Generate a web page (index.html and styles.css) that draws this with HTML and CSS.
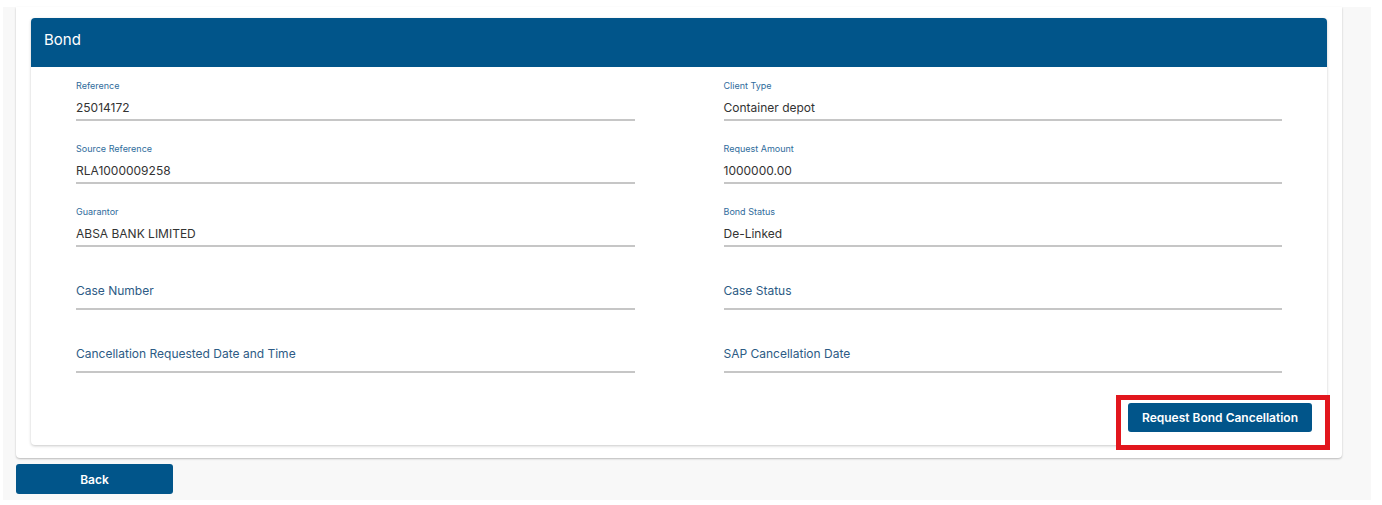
FILE: index.html
```html
<!DOCTYPE html>
<html lang="en">
<head>
    <meta charset="UTF-8">
    <meta name="viewport" content="width=device-width, initial-scale=1.0">
    <title>Bond</title>
    <link rel="stylesheet" href="styles.css">
</head>
<body>
    <div class="page">
        <div class="outer-card">
            <div class="bond-card">
                <div class="bond-header">Bond</div>

                <div class="field-grid">
                    <div class="field">
                        <div class="field-label">Reference</div>
                        <div class="field-value">25014172</div>
                    </div>
                    <div class="field">
                        <div class="field-label">Client Type</div>
                        <div class="field-value">Container depot</div>
                    </div>
                    <div class="field">
                        <div class="field-label">Source Reference</div>
                        <div class="field-value">RLA1000009258</div>
                    </div>
                    <div class="field">
                        <div class="field-label">Request Amount</div>
                        <div class="field-value">1000000.00</div>
                    </div>
                    <div class="field">
                        <div class="field-label">Guarantor</div>
                        <div class="field-value">ABSA BANK LIMITED</div>
                    </div>
                    <div class="field">
                        <div class="field-label">Bond Status</div>
                        <div class="field-value">De-Linked</div>
                    </div>
                    <div class="field empty">
                        <div class="field-label">Case Number</div>
                    </div>
                    <div class="field empty">
                        <div class="field-label">Case Status</div>
                    </div>
                    <div class="field empty">
                        <div class="field-label">Cancellation Requested Date and Time</div>
                    </div>
                    <div class="field empty">
                        <div class="field-label">SAP Cancellation Date</div>
                    </div>
                </div>

                <div class="card-actions">
                    <div class="highlight-wrap">
                        <button class="btn btn-cancel">Request Bond Cancellation</button>
                        <span class="highlight-box"></span>
                    </div>
                </div>
            </div>
        </div>

        <button class="btn btn-back">Back</button>
    </div>
</body>
</html>
```

FILE: styles.css
```css
body {
    margin: 0;
    background: #fff;
    font-family: 'Inter', 'Roboto', sans-serif;
    overflow: hidden;
}
.page {
    margin: 7px 11px 0 3px;
    padding: 0 29px 6px 13px;
    background: #f8f8f8;
}
.outer-card {
    background: #fff;
    padding: 11px 15px 13px 15px;
    border-radius: 0 0 4px 4px;
    box-shadow: 0 1px 2px rgba(0, 0, 0, 0.25);
}
.bond-card {
    background: #fff;
    border-radius: 4px;
    box-shadow: 0 1px 3px rgba(0, 0, 0, 0.22);
}
.bond-header {
    height: 49px;
    line-height: 44px;
    padding-left: 13px;
    background: #01558a;
    color: #fff;
    font-size: 15px;
    font-weight: 400;
    border-radius: 4px 4px 0 0;
}
.field-grid {
    display: grid;
    grid-template-columns: 1fr 1fr;
    column-gap: 89px;
    row-gap: 22px;
    padding: 13px 45px 0 45px;
}
.field {
    height: 41px;
    box-sizing: border-box;
    border-bottom: 2px solid #c6c6c6;
}
.field-label {
    font-size: 9px;
    line-height: 12px;
    color: #2f6c9c;
}
.field-value {
    margin-top: 8px;
    font-size: 12px;
    line-height: 16px;
    color: #333;
}
.field.empty .field-label {
    padding-top: 14px;
    font-size: 12px;
    line-height: 16px;
    color: #2d5b85;
}
.card-actions {
    display: flex;
    justify-content: flex-end;
    padding: 30px 15px 13px 0;
}
.highlight-wrap {
    position: relative;
}
.highlight-box {
    position: absolute;
    left: -12px;
    right: -18px;
    top: -8px;
    bottom: -18px;
    border: 5px solid #e2161d;
    pointer-events: none;
}
.btn {
    border: none;
    border-radius: 3px;
    background: #01558a;
    color: #fff;
    font-family: 'Inter', 'Roboto', sans-serif;
    font-size: 12px;
    font-weight: 600;
    cursor: pointer;
}
.btn-cancel {
    display: block;
    width: 184px;
    height: 29px;
}
.btn-back {
    display: block;
    margin-top: 6px;
    width: 157px;
    height: 30px;
}
```
